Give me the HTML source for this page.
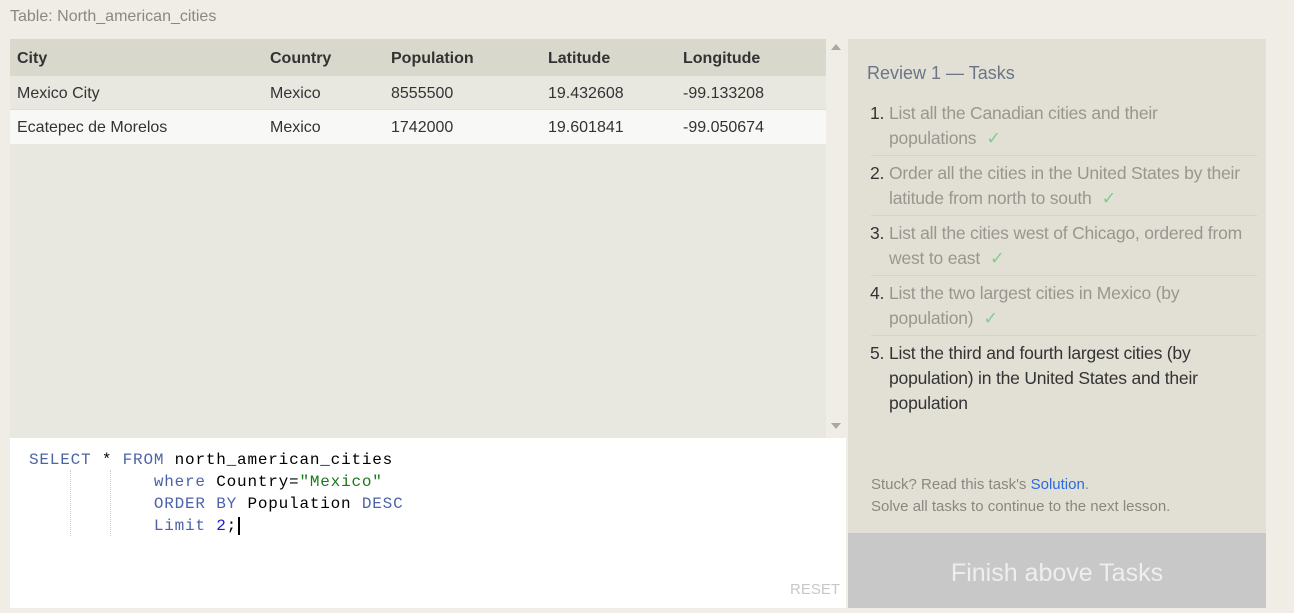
<!DOCTYPE html>
<html><head><style>
body{margin:0;width:1294px;height:608px;background:#efede5;font-family:"Liberation Sans",sans-serif;position:relative;overflow:hidden}
.a{position:absolute}
.t{font-size:16px;color:#333}
.code{font-family:"Liberation Mono",monospace;font-size:16px;letter-spacing:0.8px;line-height:22px;white-space:pre;color:#000}
.k{color:#4c63a8}.s{color:#1a7a1a}.n{color:#1a1ad0}
.task{font-size:17.5px;line-height:25px;color:#9a968f;letter-spacing:-0.2px}
.chk{color:#7ccf8c;margin-left:10px}
.it{position:relative;padding-left:18px;padding-bottom:4px;border-bottom:1px solid #d5d3c8;margin-bottom:5px}
.it span.num{position:absolute;left:-1px;color:#333}
</style></head><body>
<div class="a" style="left:10px;top:8px;font-size:16px;color:#8a8780">Table: North_american_cities</div>
<div class="a" style="left:10px;top:39px;width:816px;height:399px;background:#e9e8e0"></div>
<div class="a" style="left:10px;top:39px;width:816px;height:37px;background:#d9d8cc"></div>
<div class="a" style="left:10px;top:109px;width:816px;height:34px;background:#f8f8f6;border-top:1px solid #dedcd4"></div>
<div class="a" style="left:826px;top:39px;width:20px;height:399px;background:#efede6"></div>
<div class="a" style="left:831px;top:44px;width:0;height:0;border:5px solid transparent;border-bottom:6px solid #a8a8a8;border-top:0"></div>
<div class="a" style="left:831px;top:423px;width:0;height:0;border:5px solid transparent;border-top:6px solid #a8a8a8;border-bottom:0"></div>
<div class="a t" style="top:50px;left:17px;font-weight:bold">City</div>
<div class="a t" style="top:50px;left:270px;font-weight:bold">Country</div>
<div class="a t" style="top:50px;left:391px;font-weight:bold">Population</div>
<div class="a t" style="top:50px;left:548px;font-weight:bold">Latitude</div>
<div class="a t" style="top:50px;left:683px;font-weight:bold">Longitude</div>
<div class="a t" style="top:85px;left:17px">Mexico City</div>
<div class="a t" style="top:85px;left:270px">Mexico</div>
<div class="a t" style="top:85px;left:391px">8555500</div>
<div class="a t" style="top:85px;left:548px">19.432608</div>
<div class="a t" style="top:85px;left:683px">-99.133208</div>
<div class="a t" style="top:119px;left:17px">Ecatepec de Morelos</div>
<div class="a t" style="top:119px;left:270px">Mexico</div>
<div class="a t" style="top:119px;left:391px">1742000</div>
<div class="a t" style="top:119px;left:548px">19.601841</div>
<div class="a t" style="top:119px;left:683px">-99.050674</div>
<div class="a" style="left:10px;top:438px;width:836px;height:170px;background:#fff"></div>
<div class="a" style="left:70px;top:470px;height:66px;border-left:1px dotted #ccc"></div>
<div class="a" style="left:110px;top:470px;height:66px;border-left:1px dotted #ccc"></div>
<div class="a code" style="left:29px;top:449px"><span class="k">SELECT</span> * <span class="k">FROM</span> north_american_cities
            <span class="k">where</span> Country=<span class="s">"Mexico"</span>
            <span class="k">ORDER BY</span> Population <span class="k">DESC</span>
            <span class="k">Limit</span> <span class="n">2</span>;<span style="border-left:2px solid #000;margin-left:1px"></span></div>
<div class="a" style="left:790px;top:581px;font-size:15px;color:#c8c8c8">RESET</div>
<div class="a" style="left:848px;top:39px;width:418px;height:494px;background:#e2e0d5"></div>
<div class="a" style="left:867px;top:63px;font-size:18px;color:#6b7585">Review 1 — Tasks</div>
<div class="a task" style="left:871px;top:101px;width:386px">
<div class="it"><span class="num">1.</span>List all the Canadian cities and their<br>populations<span class="chk">✓</span></div>
<div class="it"><span class="num">2.</span>Order all the cities in the United States by their<br>latitude from north to south<span class="chk">✓</span></div>
<div class="it"><span class="num">3.</span>List all the cities west of Chicago, ordered from<br>west to east<span class="chk">✓</span></div>
<div class="it"><span class="num">4.</span>List the two largest cities in Mexico (by<br>population)<span class="chk">✓</span></div>
<div style="position:relative;padding-left:18px;color:#333"><span style="position:absolute;left:-1px">5.</span>List the third and fourth largest cities (by<br>population) in the United States and their<br>population</div>
</div>
<div class="a" style="left:871px;top:474px;font-size:15px;line-height:22px;color:#8a8780">Stuck? Read this task's <span style="color:#2a6be0">Solution</span>.<br>Solve all tasks to continue to the next lesson.</div>
<div class="a" style="left:848px;top:533px;width:418px;height:75px;background:#c8c8c8;color:#eeeeee;font-size:25px;text-align:center;line-height:80px">Finish above Tasks</div>
</body></html>
